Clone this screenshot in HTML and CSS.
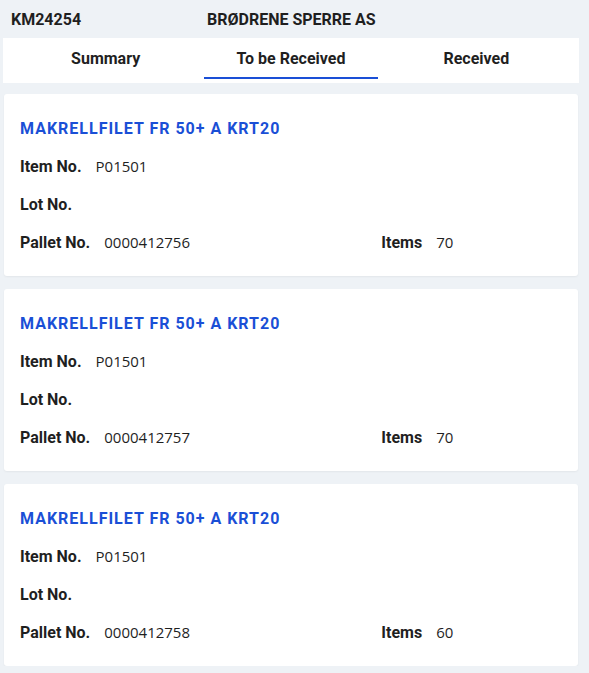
FILE: index.html
```html
<!DOCTYPE html>
<html>
<head>
  <title>KM24254</title>
  <link rel="stylesheet" href="styles.css">
</head>
<body>
  <div class="top">
    <span class="order">KM24254</span>
    <span class="vendor">BRØDRENE SPERRE AS</span>
  </div>

  <div class="tabs">
    <div class="tab">Summary</div>
    <div class="tab active">To be Received</div>
    <div class="tab">Received</div>
  </div>

  <div class="list">
    <!-- Pallet 1 -->
    <div class="card">
      <div class="title">MAKRELLFILET FR 50+ A KRT20</div>
      <div class="row"><span class="lbl">Item No.</span><span class="val">P01501</span></div>
      <div class="row"><span class="lbl">Lot No.</span></div>
      <div class="row split">
        <div><span class="lbl">Pallet No.</span><span class="val">0000412756</span></div>
        <div><span class="lbl">Items</span><span class="val">70</span></div>
      </div>
    </div>

    <!-- Pallet 2 -->
    <div class="card">
      <div class="title">MAKRELLFILET FR 50+ A KRT20</div>
      <div class="row"><span class="lbl">Item No.</span><span class="val">P01501</span></div>
      <div class="row"><span class="lbl">Lot No.</span></div>
      <div class="row split">
        <div><span class="lbl">Pallet No.</span><span class="val">0000412757</span></div>
        <div><span class="lbl">Items</span><span class="val">70</span></div>
      </div>
    </div>

    <!-- Pallet 3 -->
    <div class="card">
      <div class="title">MAKRELLFILET FR 50+ A KRT20</div>
      <div class="row"><span class="lbl">Item No.</span><span class="val">P01501</span></div>
      <div class="row"><span class="lbl">Lot No.</span></div>
      <div class="row split">
        <div><span class="lbl">Pallet No.</span><span class="val">0000412758</span></div>
        <div><span class="lbl">Items</span><span class="val">60</span></div>
      </div>
    </div>
  </div>
</body>
</html>
```

FILE: styles.css
```css
body {
  margin: 0;
  background-color: #eef2f6;
  font-family: Roboto, "Liberation Sans", sans-serif;
  color: #1f1f1f;
}

.top {
  display: flex;
  height: 38px;
  align-items: center;
  padding-left: 11px;
  font-weight: bold;
  font-size: 16px;
}

.order {
  width: 196px;
}

.tabs {
  display: flex;
  margin: 0 10px 0 3px;
  padding: 0 10px;
  height: 45px;
  background-color: #fff;
}

.tab {
  flex: 1;
  margin: 0 6px;
  display: flex;
  align-items: center;
  justify-content: center;
  font-weight: bold;
  font-size: 16px;
  border-bottom: 2px solid transparent;
  box-sizing: border-box;
  padding-top: 2px;
  height: 41px;
}

.tab.active {
  border-bottom-color: #1a4fd6;
}

.list {
  display: flex;
  flex-direction: column;
  gap: 13px;
  padding: 11px 11px 0 4px;
}

.card {
  background-color: #fff;
  border-radius: 3px;
  box-shadow: 0 1px 2px rgba(0,0,0,0.05);
  padding: 15px 16px;
  height: 182px;
  box-sizing: border-box;
}

.title {
  height: 38px;
  display: flex;
  align-items: center;
  color: #1a4fd6;
  font-weight: bold;
  font-size: 16px;
  letter-spacing: 1px;
}

.row {
  height: 38px;
  display: flex;
  align-items: center;
}

.row.split {
  display: grid;
  grid-template-columns: 2fr 1fr;
}

.lbl {
  font-weight: bold;
  font-size: 16px;
  margin-right: 14px;
}

.val {
  font-family: "Open Sans", "Noto Sans", sans-serif;
  font-size: 15px;
}
```
